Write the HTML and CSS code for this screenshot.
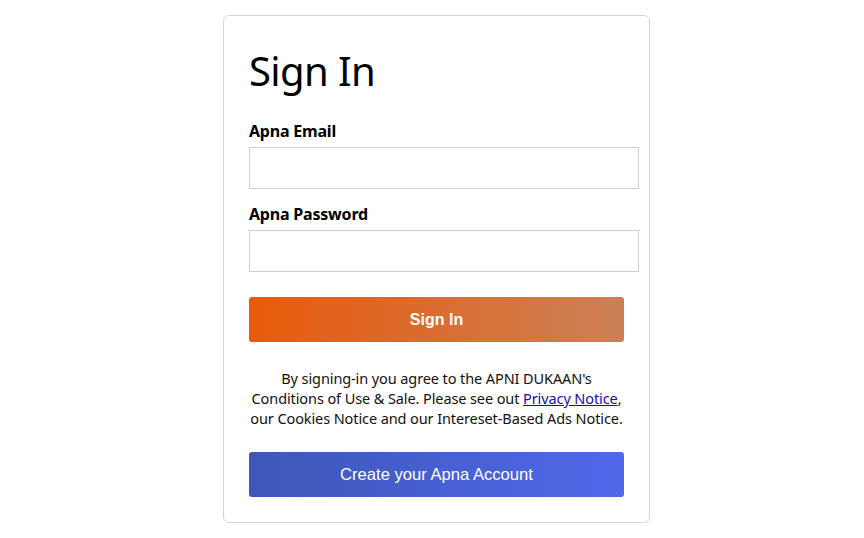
FILE: index.html
```html
<!DOCTYPE html>
<html>
<head>
<meta charset="utf-8">
<link rel="stylesheet" href="styles.css">
</head>
<body>
<div class="page">
  <div class="card">
    <h1 class="title">Sign In</h1>
    <form class="form">
      <label class="label">Apna Email</label>
      <input class="field" type="email">
      <label class="label label-second">Apna Password</label>
      <input class="field" type="password">
      <button class="btn btn-signin" type="button">Sign In</button>
    </form>
    <p class="terms">By signing-in you agree to the APNI DUKAAN's Conditions of Use &amp; Sale. Please see out <a href="#" class="link">Privacy Notice</a>, our Cookies Notice and our Intereset-Based Ads Notice.</p>
    <button class="btn btn-create" type="button">Create your Apna Account</button>
  </div>
</div>
</body>
</html>
```
FILE: styles.css
```css
html, body {
  margin: 0;
  padding: 0;
  background: #fff;
}
.page {
  display: flex;
  justify-content: center;
  padding: 15px 0 0 9px;
}
.card {
  width: 375px;
  padding: 25px;
  border: 1px solid #d4d4d4;
  border-radius: 6px;
  font-family: "Noto Sans", "Open Sans", sans-serif;
  color: #000;
}
.title {
  margin: 5px 0 24px;
  font-size: 40px;
  font-weight: 400;
  line-height: 50px;
  letter-spacing: -0.6px;
}
.form {
  display: flex;
  flex-direction: column;
  align-items: flex-start;
}
.label {
  font-size: 16px;
  font-weight: 700;
  line-height: 23px;
  letter-spacing: -0.2px;
  margin-bottom: 4px;
}
.label-second {
  margin-top: 14px;
}
.field {
  box-sizing: border-box;
  width: 390px;
  height: 42px;
  margin: 0;
  border: 1px solid #cfcfcf;
  border-radius: 0;
  padding: 0 6px;
  outline: none;
}
.btn {
  display: block;
  width: 375px;
  height: 45px;
  border: none;
  border-radius: 3px;
  color: #fff;
  font-family: "Liberation Sans", Arial, sans-serif;
  cursor: pointer;
}
.btn-signin {
  margin-top: 25px;
  font-size: 16px;
  font-weight: 700;
  background: linear-gradient(to right, #e85a0a, #cc8057);
}
.terms {
  margin: 26px 0 24px;
  font-size: 14.5px;
  line-height: 20px;
  letter-spacing: -0.1px;
  text-align: center;
  color: #111;
}
.link {
  color: #1a0dab;
  text-decoration: underline;
}
.btn-create {
  font-size: 16.6px;
  background: linear-gradient(to right, #3d57b8, #5068ea);
}
```
